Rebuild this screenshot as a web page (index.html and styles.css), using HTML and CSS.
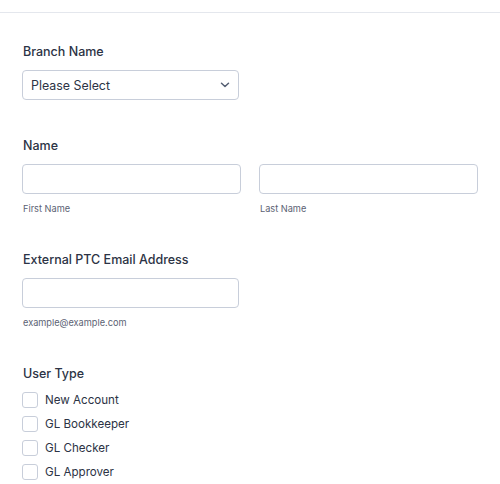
FILE: index.html
```html
<!DOCTYPE html>
<html>
<head>
<meta charset="utf-8">
<link rel="stylesheet" href="styles.css">
</head>
<body>
<div class="topbar"></div>
<form class="form">
  <div class="field">
    <label class="label">Branch Name</label>
    <div class="select">
      <span>Please Select</span>
      <svg class="chev" width="10" height="6" viewBox="0 0 10 6"><path d="M1.5 1.2 L5 4.5 L8.5 1.2" fill="none" stroke="#555f73" stroke-width="1.5" stroke-linecap="round" stroke-linejoin="round"/></svg>
    </div>
  </div>
  <div class="field">
    <label class="label">Name</label>
    <div class="name-row">
      <div class="name-col">
        <div class="input wide"></div>
        <div class="sub">First Name</div>
      </div>
      <div class="name-col">
        <div class="input wide"></div>
        <div class="sub">Last Name</div>
      </div>
    </div>
  </div>
  <div class="field">
    <label class="label">External PTC Email Address</label>
    <div class="input narrow"></div>
    <div class="sub">example@example.com</div>
  </div>
  <div class="field last">
    <label class="label">User Type</label>
    <div class="checks">
      <div class="check"><span class="box"></span><span>New Account</span></div>
      <div class="check"><span class="box"></span><span>GL Bookkeeper</span></div>
      <div class="check"><span class="box"></span><span>GL Checker</span></div>
      <div class="check"><span class="box"></span><span>GL Approver</span></div>
    </div>
  </div>
</form>
</body>
</html>
```

FILE: styles.css
```css
html, body {
  margin: 0;
  padding: 0;
  background: #ffffff;
  font-family: Inter, "Noto Sans", sans-serif;
  color: #2c3345;
}
.topbar {
  height: 12px;
  border-bottom: 1px solid #e4e7ed;
}
.form {
  padding: 29px 22px 0 22px;
  display: block;
}
.field {
  margin-bottom: 36px;
}
.field.last {
  margin-bottom: 0;
}
.label {
  display: block;
  font-size: 12.5px;
  line-height: 20px;
  font-weight: 450;
  margin: 0 0 8px 1px;
  color: #2c3345;
}
.select {
  box-sizing: border-box;
  width: 217px;
  height: 30px;
  border: 1px solid #c8ceda;
  border-radius: 4px;
  display: flex;
  align-items: center;
  justify-content: space-between;
  padding: 0 8px 0 8px;
  font-size: 12.4px;
  color: #2c3345;
}
.name-row {
  display: flex;
  gap: 18px;
}
.input {
  box-sizing: border-box;
  height: 30px;
  border: 1px solid #c8ceda;
  border-radius: 4px;
}
.wide { width: 219px; }
.narrow { width: 217px; }
.sub {
  font-size: 9.2px;
  line-height: 11px;
  margin: 9px 0 0 1px;
  color: #5b6273;
}
.checks {
  display: flex;
  flex-direction: column;
  gap: 8px;
}
.check {
  display: flex;
  align-items: center;
  height: 16px;
  font-size: 11.6px;
  color: #2c3345;
}
.box {
  box-sizing: border-box;
  width: 16px;
  height: 16px;
  border: 1px solid #c8ceda;
  border-radius: 3px;
  margin-right: 7px;
}
```
